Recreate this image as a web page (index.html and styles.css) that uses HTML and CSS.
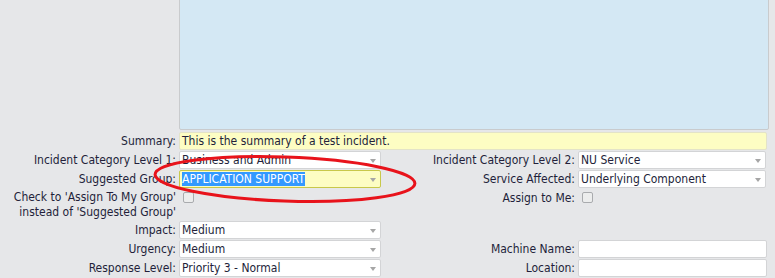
FILE: index.html
```
<!doctype html>
<html lang="en">
<head>
  <meta charset="utf-8">
  <title>Log Incident</title>
  <link rel="stylesheet" href="styles.css">
</head>
<body>
  <main class="page">
    <form class="incident-form">
      <div class="label"></div>
      <div class="description"></div>

      <div class="label">Summary:</div>
      <div class="field field-summary">This is the summary of a test incident.</div>

      <div class="label">Incident Category Level 1:</div>
      <div class="field select"><span>Business and Admin</span><i class="arrow"></i></div>
      <div class="label">Incident Category Level 2:</div>
      <div class="field select"><span>NU Service</span><i class="arrow"></i></div>

      <div class="label">Suggested Group:</div>
      <div class="field select focused"><span class="selected">APPLICATION SUPPORT</span><i class="arrow"></i></div>
      <div class="label">Service Affected:</div>
      <div class="field select"><span>Underlying Component</span><i class="arrow"></i></div>

      <div class="label label-multi">Check to 'Assign To My Group'<br>instead of 'Suggested Group'</div>
      <div class="check-cell"><span class="checkbox"></span></div>
      <div class="label label-top">Assign to Me:</div>
      <div class="check-cell"><span class="checkbox"></span></div>

      <div class="label">Impact:</div>
      <div class="field select"><span>Medium</span><i class="arrow"></i></div>
      <div class="label"></div>
      <div></div>

      <div class="label">Urgency:</div>
      <div class="field select"><span>Medium</span><i class="arrow"></i></div>
      <div class="label">Machine Name:</div>
      <div class="field"></div>

      <div class="label">Response Level:</div>
      <div class="field select"><span>Priority 3 - Normal</span><i class="arrow"></i></div>
      <div class="label">Location:</div>
      <div class="field"></div>
    </form>

    <!-- hand drawn annotation round the suggested group -->
    <svg class="annotation" width="300" height="60" viewBox="0 0 300 60">
      <ellipse cx="132" cy="29" rx="130" ry="22" transform="rotate(2 132 29)" fill="none" stroke="#e8131b" stroke-width="3"/>
    </svg>
  </main>
</body>
</html>
```

FILE: styles.css
```
html, body {
  margin: 0px;
  background-color: #e6e7e9;
  font-family: "DejaVu Sans Condensed", "DejaVu Sans", sans-serif;
  font-size: 12px;
  color: #231f3a;
}

.page {
  position: relative;
  width: 775px;
  height: 278px;
  overflow: hidden;
}

.incident-form {
  display: grid;
  grid-template-columns: 179px 203px 196px 189px;
  row-gap: 1px;
  margin-top: -2px;
}

.label {
  text-align: right;
  padding-right: 3px;
  line-height: 18px;
  white-space: nowrap;
}

.label-multi {
  line-height: 15px;
  padding-top: 1px;
  height: 30px;
}

.label-top {
  align-self: start;
}

.description {
  grid-column: 2 / 5;
  height: 132px;
  margin-right: -2px;
  margin-bottom: 1px;
  background-color: #d4e8f4;
  border: 1px solid #c9cbcd;
  border-radius: 2px;
  box-sizing: border-box;
}

.field {
  position: relative;
  height: 18px;
  line-height: 16px;
  box-sizing: border-box;
  background-color: #fff;
  border: 1px solid #d3d4d6;
  border-radius: 2px;
  padding: 0 2px;
  white-space: nowrap;
  overflow: hidden;
}

.field-summary {
  grid-column: 2 / 5;
  background-color: #fdfdc3;
  border-color: #e3e3c8;
}

.select {
  margin-right: 1px;
}

.focused {
  background-color: #fdfdc3;
  border-color: #c8c84a;
}

.selected {
  background-color: #3399ff;
  color: #fff;
}

.arrow {
  position: absolute;
  right: 4px;
  top: 7px;
  width: 0;
  height: 0;
  border-left: 3px solid transparent;
  border-right: 3px solid transparent;
  border-top: 4px solid #a6a6a6;
}

.check-cell {
  padding: 3px 0 0 4px;
}

.checkbox {
  display: block;
  width: 9px;
  height: 9px;
  border: 1px solid #a9abae;
  border-radius: 2px;
  background-color: #eceded;
}

.annotation {
  position: absolute;
  left: 153px;
  top: 150px;
}
```
